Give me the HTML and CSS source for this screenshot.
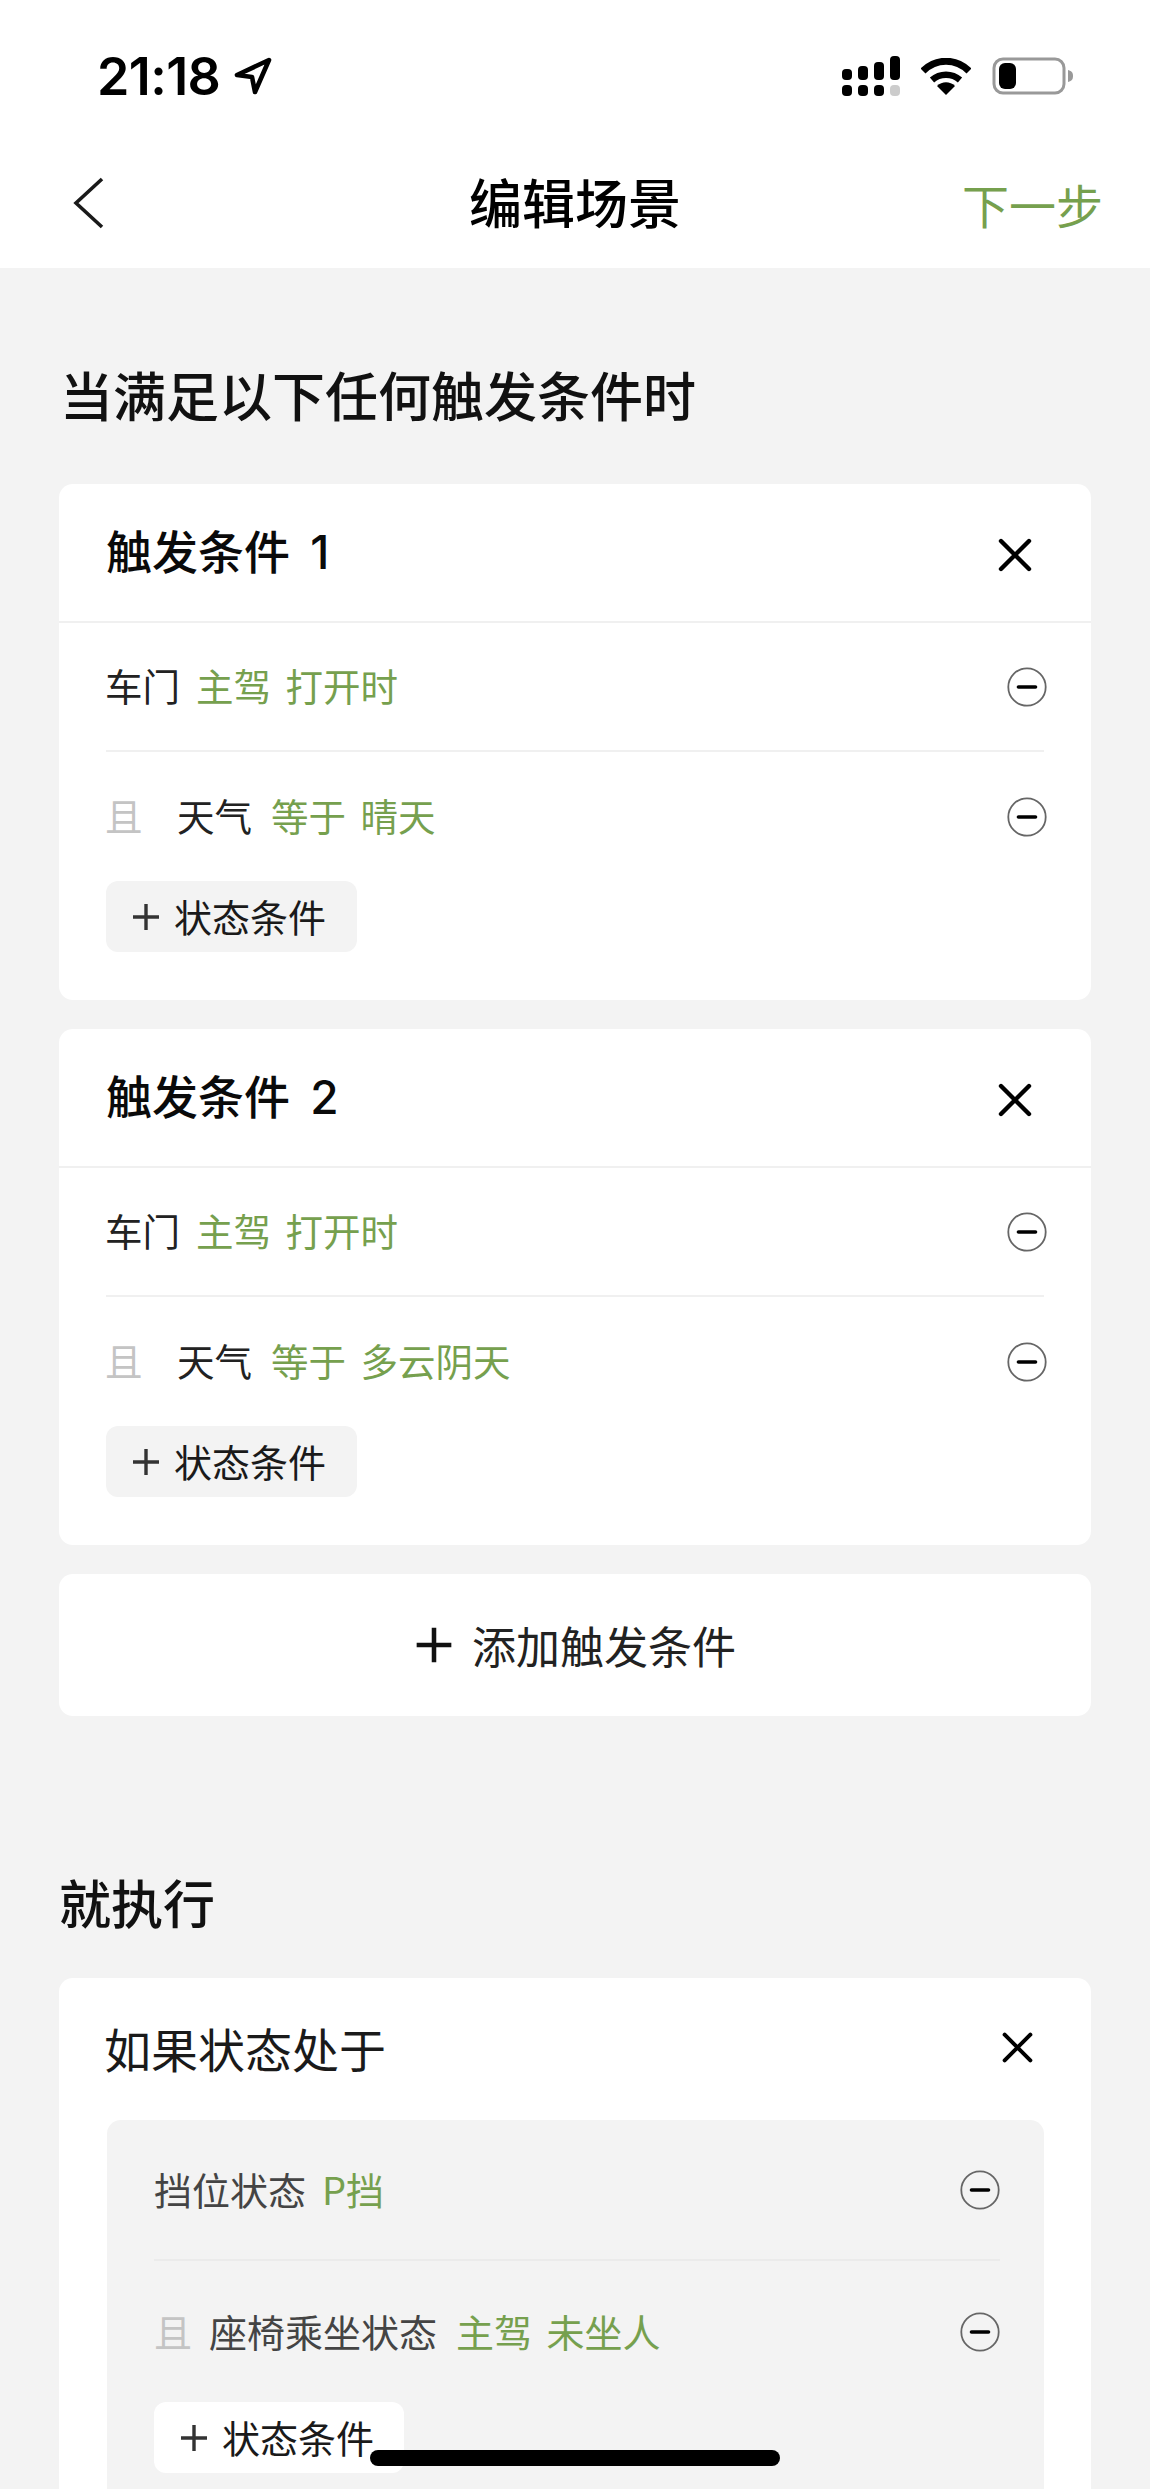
FILE: index.html
```html
<!DOCTYPE html>
<html lang="zh-CN">
<head>
<meta charset="utf-8">
<title>编辑场景</title>
<link rel="stylesheet" href="styles.css">
</head>
<body>
<div class="app">
  <svg width="0" height="0" class="defs">
    <symbol id="close" viewBox="0 0 36 36"><path d="M4 4 32 32M32 4 4 32" fill="none" stroke="currentColor" stroke-width="4.4" stroke-linecap="round"/></symbol>
    <symbol id="minus" viewBox="0 0 40 40"><circle cx="20" cy="20" r="18.7" fill="none" stroke="#666" stroke-width="1.8"/><path d="M11.5 20h17" fill="none" stroke="#000" stroke-width="3.6" stroke-linecap="round"/></symbol>
    <symbol id="plus" viewBox="0 0 30 30"><path d="M15 2v26M2 15h26" fill="none" stroke="currentColor" stroke-width="3.4"/></symbol>
  </svg>

  <header class="top">
    <div class="status">
      <div class="time">21:18
        <svg class="loc" width="42" height="42" viewBox="0 0 42 42"><path d="M37 5 5 20l15 2 3 15z" fill="none" stroke="#000" stroke-width="4.6" stroke-linejoin="round"/></svg>
      </div>
      <div class="status-icons">
        <svg width="58" height="40" viewBox="0 0 58 40"><g fill="#000"><rect x="0" y="13" width="10" height="11" rx="4"/><rect x="16" y="10" width="10" height="14" rx="4"/><rect x="32" y="6" width="10" height="18" rx="4"/><rect x="48" y="0" width="10" height="24" rx="4"/><rect x="0" y="29" width="10" height="11" rx="4"/><rect x="16" y="29" width="10" height="11" rx="4"/><rect x="32" y="29" width="10" height="11" rx="4"/></g><rect x="48" y="29" width="10" height="11" rx="4" fill="#ccc"/></svg>
        <svg width="50" height="37" viewBox="0 0 50 37"><path d="M2 13C15 0 35 0 48 13" fill="none" stroke="#000" stroke-width="7"/><path d="M11 22c8-7 20-7 28 0" fill="none" stroke="#000" stroke-width="6.5"/><path d="M16 28c5-5 13-5 18 0l-9 9z" fill="#000"/></svg>
        <svg width="81" height="38" viewBox="0 0 81 38"><rect x="2" y="2" width="70" height="34" rx="9" fill="none" stroke="#999" stroke-width="3"/><rect x="7" y="6" width="17" height="26" rx="6" fill="#000"/><path d="M76 13c4 1 5 3 5 6s-1 5-5 6z" fill="#999"/></svg>
      </div>
    </div>
    <nav class="nav">
      <svg class="back" width="32" height="52" viewBox="0 0 32 52"><path d="M29 2 3 26l26 24" fill="none" stroke="#1a1a1a" stroke-width="3.6"/></svg>
      <h1 class="nav-title">编辑场景</h1>
      <span class="nav-next">下一步</span>
    </nav>
  </header>

  <main class="main">
    <h2 class="section-title first">当满足以下任何触发条件时</h2>

    <section class="card trigger">
      <div class="card-head">
        <span class="card-title">触发条件 1</span>
        <svg class="close"><use href="#close"/></svg>
      </div>
      <div class="card-body">
        <div class="row">
          <span class="text"><span class="name">车门</span><span class="val">主驾 打开时</span></span>
          <svg class="minus"><use href="#minus"/></svg>
        </div>
        <div class="row">
          <span class="text"><span class="and">且</span><span class="name">天气</span><span class="val">等于 晴天</span></span>
          <svg class="minus"><use href="#minus"/></svg>
        </div>
        <div class="add-state"><svg class="plus"><use href="#plus"/></svg>状态条件</div>
      </div>
    </section>

    <section class="card trigger">
      <div class="card-head">
        <span class="card-title">触发条件 2</span>
        <svg class="close"><use href="#close"/></svg>
      </div>
      <div class="card-body">
        <div class="row">
          <span class="text"><span class="name">车门</span><span class="val">主驾 打开时</span></span>
          <svg class="minus"><use href="#minus"/></svg>
        </div>
        <div class="row">
          <span class="text"><span class="and">且</span><span class="name">天气</span><span class="val">等于 多云阴天</span></span>
          <svg class="minus"><use href="#minus"/></svg>
        </div>
        <div class="add-state"><svg class="plus"><use href="#plus"/></svg>状态条件</div>
      </div>
    </section>

    <section class="card add-trigger">
      <svg class="plus-lg"><use href="#plus"/></svg>添加触发条件
    </section>

    <h2 class="section-title second">就执行</h2>

    <section class="card action">
      <div class="action-head">
        <span class="action-title">如果状态处于</span>
        <svg class="close small"><use href="#close"/></svg>
      </div>
      <div class="panel">
        <div class="row inner">
          <span class="text"><span class="name">挡位状态</span><span class="val">P挡</span></span>
          <svg class="minus"><use href="#minus"/></svg>
        </div>
        <div class="row inner">
          <span class="text"><span class="and tight">且</span><span class="name">座椅乘坐状态</span><span class="val">主驾 未坐人</span></span>
          <svg class="minus"><use href="#minus"/></svg>
        </div>
        <div class="add-state white"><svg class="plus"><use href="#plus"/></svg>状态条件</div>
      </div>
    </section>
  </main>

  <div class="home-bar"></div>
</div>
</body>
</html>
```

FILE: styles.css
```css
* { box-sizing: border-box; }
html, body { margin: 0; padding: 0; }
body {
  font-family: "Noto Sans CJK SC", "Noto Sans", sans-serif;
  color: #1a1a1a;
  background: #f3f3f3;
}
h1, h2 { margin: 0; font-weight: 500; }
.defs { position: absolute; }
.app {
  position: relative;
  width: 1150px;
  height: 2489px;
  overflow: hidden;
  background: #f3f3f3;
}

/* header */
.top { height: 268px; background: #fff; }
.status {
  height: 138px;
  padding: 14px 77px 0 97px;
  display: flex;
  align-items: center;
  justify-content: space-between;
}
.time {
  display: flex;
  align-items: center;
  gap: 12px;
  font-family: Inter, Roboto, sans-serif;
  font-weight: 600;
  font-size: 52px;
  letter-spacing: -0.6px;
  color: #000;
}
.status-icons { display: flex; align-items: center; gap: 21px; }
.nav {
  height: 130px;
  padding: 0 75px 0 73px;
  display: flex;
  align-items: center;
  justify-content: space-between;
  position: relative;
}
.nav-title {
  font-size: 53px;
  line-height: 60px;
  color: #000;
  position: absolute;
  left: 0;
  right: 0;
  text-align: center;
  margin-top: -4px;
}
.nav-next {
  font-size: 47px;
  color: #76a04e;
  margin-right: -28px;
  position: relative;
}

/* main */
.main { padding: 0 59px; }
.section-title {
  font-size: 53px;
  line-height: 60px;
  color: #111;
}
.section-title.first { padding: 96px 0 60px 1px; }
.section-title.second { padding: 127px 0 46px 0; font-size: 52px; }

.card { background: #fff; border-radius: 14px; margin-bottom: 29px; }
.trigger { height: 516px; }
.card-head {
  height: 139px;
  padding: 0 58px 0 47px;
  display: flex;
  align-items: center;
  justify-content: space-between;
  border-bottom: 2px solid #f0f0f0;
}
.card-title {
  font-family: Inter, "Noto Sans CJK SC", sans-serif;
  font-size: 46px;
  font-weight: 500;
  word-spacing: 8px;
  color: #0a0a0a;
  padding-bottom: 7px;
}
.close { width: 36px; height: 36px; color: #000; margin-top: 4px; }
.close.small { width: 33px; height: 33px; margin-top: 0; }
.card-body { padding: 0 47px; }

.row {
  height: 129px;
  display: flex;
  align-items: center;
  justify-content: space-between;
  border-bottom: 2px solid #f0f0f0;
}
.row + .row { height: 129px; border-bottom: 0; }
.text { display: flex; align-items: center; font-size: 37.5px; word-spacing: 6px; padding-bottom: 4px; margin-left: -1px; }
.name { color: #222; margin-right: 16px; }
.val { color: #76a04e; }
.and { width: 72px; color: #c4c4c4; }
.and.tight { width: 55px; }
.and ~ .val { margin-left: 3px; }
.minus { width: 40px; height: 40px; flex: none; margin-right: -3px; }

.add-state {
  width: 251px;
  height: 71px;
  display: flex;
  align-items: center;
  gap: 13px;
  padding: 0 0 2px 25px;
  background: #f3f3f3;
  border-radius: 12px;
  font-size: 38px;
  color: #1a1a1a;
}
.plus { width: 30px; height: 30px; color: #333; flex: none; margin-top: 2px; }

.add-trigger {
  height: 142px;
  display: flex;
  align-items: center;
  justify-content: center;
  gap: 18px;
  font-size: 44px;
  color: #222;
}
.plus-lg { width: 40px; height: 40px; color: #111; }

.action { height: 600px; padding: 0 47px 0 48px; }
.action-head {
  height: 142px;
  margin-left: -3px;
  padding: 0 10px 3px 0;
  display: flex;
  align-items: center;
  justify-content: space-between;
}
.action-title { font-size: 47px; color: #1a1a1a; }
.panel {
  height: 500px;
  background: #f3f3f3;
  border-radius: 14px;
  padding: 0 44px 0 47px;
}
.row.inner { height: 141px; border-bottom-color: #ebebeb; }
.row.inner + .row.inner { height: 141px; }
.row.inner .minus { margin-right: 0; }
.row.inner .text { font-size: 38px; padding-bottom: 2px; margin-left: 0; }
.row.inner .name { color: #444; }
.add-state.white { background: #fff; width: 250px; }

.home-bar {
  position: absolute;
  left: 370px;
  top: 2450px;
  width: 410px;
  height: 16px;
  background: #000;
  border-radius: 8px;
}
```
